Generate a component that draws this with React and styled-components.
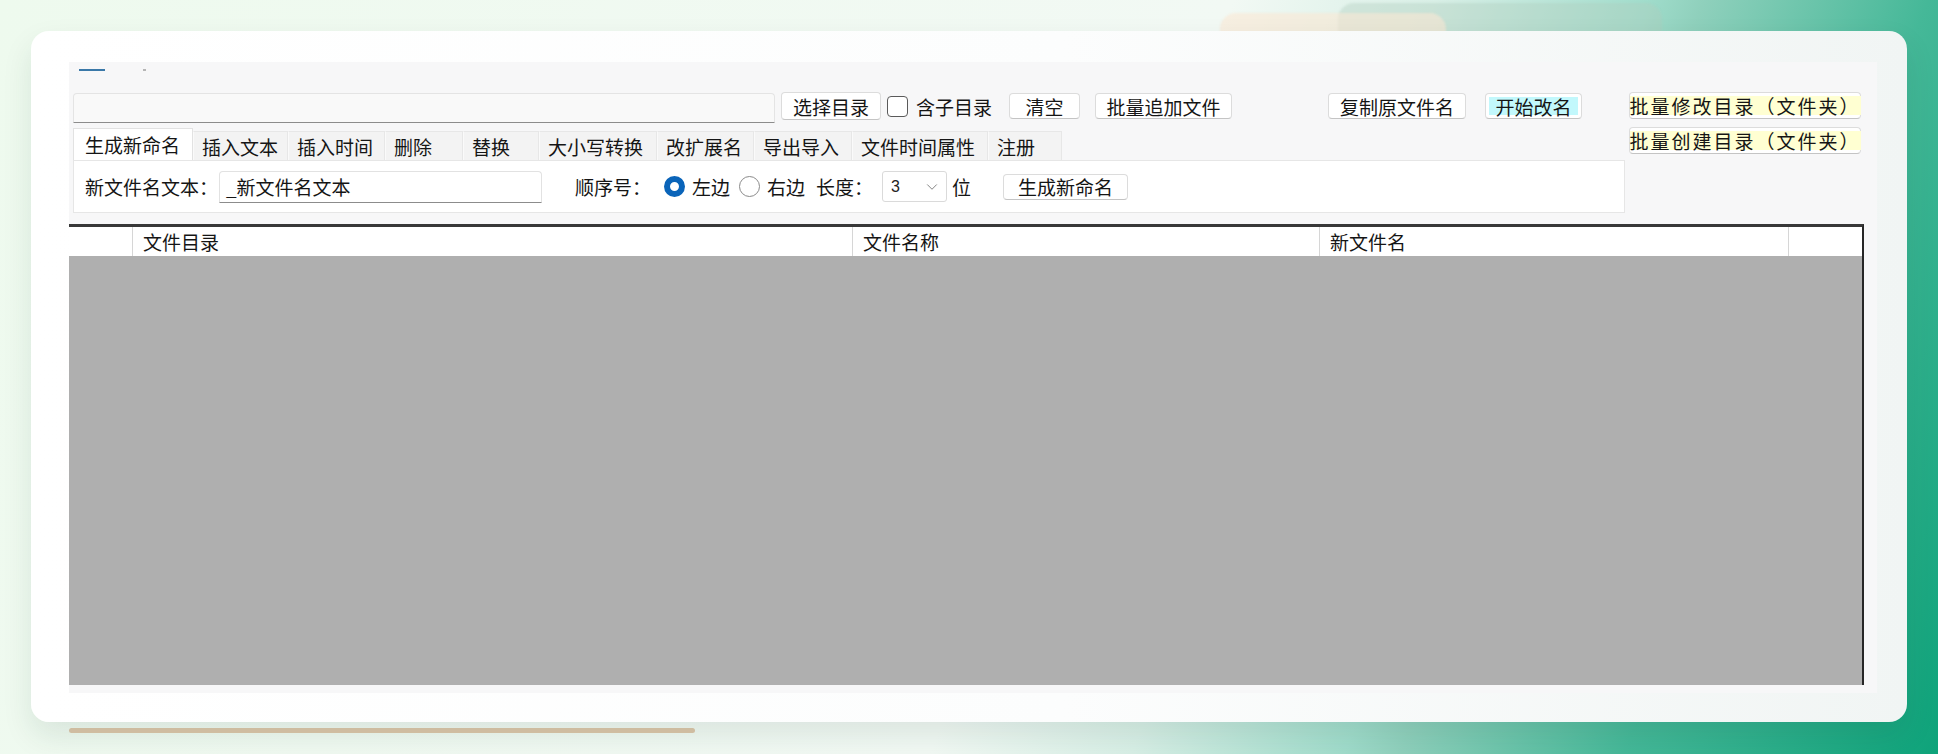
import React from 'react';
import styled, { createGlobalStyle } from 'styled-components';
import { ChevronDown } from 'lucide-react';

const Global = createGlobalStyle`
  html, body { margin: 0; padding: 0; }
  body {
    font-family: "Noto Sans CJK SC", "Noto Sans", "Liberation Sans", sans-serif;
    color: #151515;
  }
  #root { width: 1938px; height: 754px; overflow: hidden; }
  * { box-sizing: border-box; }
`;

const Page = styled.div`
  position: relative;
  width: 1938px;
  height: 754px;
  padding: 31px 31px 0;
  overflow: hidden;
  background: linear-gradient(
    112deg,
    #eefaee 0%,
    #f2f9f4 55%,
    #d8efe6 64%,
    #a0dccb 73.5%,
    #8fd0bc 76%,
    #45b898 86%,
    #0ea37a 100%
  );
`;

const GhostTab = styled.div`
  position: absolute;
  top: ${p => p.$top}px;
  left: ${p => p.$left}px;
  width: ${p => p.$w}px;
  height: 60px;
  border-radius: 16px;
  background: ${p => p.$bg};
  filter: blur(1px);
  z-index: 0;
`;

const Card = styled.div`
  position: relative;
  z-index: 1;
  height: 691px;
  border-radius: 18px;
  background: linear-gradient(90deg, #ffffff 0%, #fcfdfd 55%, #f1f5f4 100%);
  box-shadow: 0 14px 30px rgba(20, 60, 45, 0.1);
  padding: 31px 30px 29px 38px;
`;

const Window = styled.div`
  height: 100%;
  background: #f7f7f8;
  display: flex;
  flex-direction: column;
`;

const TitleStrip = styled.div`
  height: 29px;
  display: flex;
  align-items: flex-start;
  padding: 7px 0 0 10px;
  gap: 38px;
`;

const TitleMark = styled.span`
  display: block;
  width: ${p => p.$w}px;
  height: 2px;
  background: ${p => p.$c};
`;

const TopArea = styled.div`
  display: flex;
  padding-left: 4px;
`;

const LeftArea = styled.div`
  width: 1552px;
  display: flex;
  flex-direction: column;
`;

const Row = styled.div`
  height: 32px;
  display: flex;
  align-items: flex-start;
`;

const PathInput = styled.div`
  width: 702px;
  height: 30px;
  margin-top: 2px;
  background: #f9f9f9;
  border: 1px solid #e4e4e4;
  border-bottom: 1px solid #8c8c8c;
  border-radius: 4px 4px 0 0;
`;

const Button = styled.div`
  flex: none;
  width: ${p => p.$w}px;
  height: ${p => p.$h || 28}px;
  margin-left: ${p => p.$ml || 0}px;
  margin-top: ${p => p.$mt ?? 1}px;
  padding: ${p => (p.$tint ? '3px' : '0')};
  display: flex;
  align-items: stretch;
  justify-content: center;
  background: #ffffff;
  border: 1px solid #dcdcdc;
  border-bottom-color: #c4c4c4;
  border-radius: 4px;
  font-size: 19px;
  line-height: 1;
  white-space: nowrap;
`;

const ButtonFace = styled.span`
  flex: 1;
  display: flex;
  align-items: center;
  justify-content: center;
  background: ${p => p.$tint || 'transparent'};
  letter-spacing: ${p => p.$ls || 0}px;
`;

const Check = styled.div`
  flex: none;
  display: flex;
  align-items: center;
  height: 30px;
  margin-left: ${p => p.$ml}px;
  font-size: 19px;
  line-height: 1;
  gap: 8px;
`;

const CheckBox = styled.span`
  width: 21px;
  height: 21px;
  border: 1.5px solid #5a5a5a;
  border-radius: 4px;
  background: #fff;
`;

const Tabs = styled.div`
  margin-top: 5px;
  height: 32px;
  display: flex;
  align-items: flex-end;
`;

const Tab = styled.div`
  flex: none;
  width: ${p => p.$w}px;
  height: ${p => (p.$active ? 32 : 29)}px;
  padding-left: ${p => (p.$active ? 11 : 8)}px;
  display: flex;
  align-items: center;
  font-size: 19px;
  line-height: 1;
  white-space: nowrap;
  background: ${p => (p.$active ? '#ffffff' : '#f3f3f3')};
  border: 1px solid ${p => (p.$active ? '#e2e2e2' : '#e7e7e7')};
  border-left-color: ${p => (p.$active ? '#e2e2e2' : '#fafafa')};
  border-bottom: none;
`;

const TabPanel = styled.div`
  height: 53px;
  background: #ffffff;
  border: 1px solid #e6e6e6;
  display: flex;
  align-items: center;
  padding-left: 11px;
`;

const Label = styled.span`
  flex: none;
  width: ${p => p.$w}px;
  margin-left: ${p => p.$ml || 0}px;
  font-size: 19px;
  line-height: 1;
  white-space: nowrap;
  overflow: visible;
`;

const TextField = styled.div`
  flex: none;
  width: 323px;
  height: 32px;
  display: flex;
  align-items: center;
  padding-left: 6px;
  background: #fff;
  border: 1px solid #e2e2e2;
  border-bottom: 1px solid #8c8c8c;
  border-radius: 4px 4px 0 0;
  font-size: 19px;
  line-height: 1;
`;

const Radio = styled.span`
  flex: none;
  width: 21px;
  height: 21px;
  border-radius: 50%;
  background: #fff;
  margin-right: ${p => p.$mr}px;
  border: ${p => (p.$on ? '6px solid #0a64b9' : '1.5px solid #8a8a8a')};
`;

const Select = styled.div`
  flex: none;
  width: 65px;
  height: 31px;
  display: flex;
  align-items: center;
  justify-content: space-between;
  padding: 0 5px 0 8px;
  background: #fff;
  border: 1px solid #dadada;
  border-radius: 3px;
  font-family: "Liberation Sans", "Noto Sans", sans-serif;
  font-size: 16px;
  color: #222;
`;

const RightArea = styled.div`
  margin-left: 4px;
  padding-top: 1px;
  display: flex;
  flex-direction: column;
  gap: 8px;
`;

const Table = styled.div`
  margin-top: 11px;
  width: 1795px;
  height: 461px;
  display: flex;
  flex-direction: column;
  border-top: 3px solid #383838;
  border-right: 2px solid #262626;
`;

const HeaderRow = styled.div`
  height: 29px;
  display: grid;
  grid-template-columns: 64px 720px 467px 469px 1fr;
  background: #ffffff;
`;

const HeaderCell = styled.div`
  display: flex;
  align-items: center;
  padding-left: 10px;
  font-size: 19px;
  line-height: 1;
  border-right: ${p => (p.$last ? 'none' : '1px solid #d6d6d6')};
`;

const Body = styled.div`
  flex: 1;
  background: #afafaf;
`;

const BottomBar = styled.div`
  margin: 6px 0 0 38px;
  width: 626px;
  height: 5px;
  border-radius: 3px;
  background: #dcc6a9;
`;

const tabs = [
  ['生成新命名', 120],
  ['插入文本', 95],
  ['插入时间', 97],
  ['删除', 78],
  ['替换', 76],
  ['大小写转换', 118],
  ['改扩展名', 97],
  ['导出导入', 98],
  ['文件时间属性', 136],
  ['注册', 74],
];

export default function App() {
  return (
    <>
      <Global />
      <Page>
        <GhostTab $top={3} $left={1338} $w={324} $bg="rgba(175, 205, 190, 0.38)" />
        <GhostTab $top={13} $left={1220} $w={226} $bg="rgba(250, 232, 212, 0.6)" />
        <Card>
          <Window>
            <TitleStrip>
              <TitleMark $w={26} $c="#3a78a8" />
              <TitleMark $w={3} $c="#b5b5b5" />
            </TitleStrip>
            <TopArea>
              <LeftArea>
                <Row>
                  <PathInput />
                  <Button $w={100} $ml={6}><ButtonFace>选择目录</ButtonFace></Button>
                  <Check $ml={6}>
                    <CheckBox />
                    <span>含子目录</span>
                  </Check>
                  <Button $w={71} $ml={17} $mt={2} $h={26}><ButtonFace>清空</ButtonFace></Button>
                  <Button $w={137} $ml={15} $mt={2} $h={26}><ButtonFace>批量追加文件</ButtonFace></Button>
                  <Button $w={138} $ml={96} $mt={2} $h={26}><ButtonFace>复制原文件名</ButtonFace></Button>
                  <Button $w={97} $ml={19} $mt={2} $h={26} $tint>
                    <ButtonFace $tint="#c2f8fc">开始改名</ButtonFace>
                  </Button>
                </Row>
                <Tabs>
                  {tabs.map(([t, w], i) => (
                    <Tab key={t} $w={w} $active={i === 0}>{t}</Tab>
                  ))}
                </Tabs>
                <TabPanel>
                  <Label $w={134}>新文件名文本：</Label>
                  <TextField>_新文件名文本</TextField>
                  <Label $w={89} $ml={33}>顺序号：</Label>
                  <Radio $on $mr={7} />
                  <Label $w={47}>左边</Label>
                  <Radio $mr={7} />
                  <Label $w={49}>右边</Label>
                  <Label $w={66}>长度：</Label>
                  <Select>
                    <span>3</span>
                    <ChevronDown size={18} strokeWidth={1.2} color="#777" />
                  </Select>
                  <Label $w={51} $ml={5}>位</Label>
                  <Button $w={125} $h={26} $mt={0}><ButtonFace>生成新命名</ButtonFace></Button>
                </TabPanel>
              </LeftArea>
              <RightArea>
                <Button $w={232} $h={27} $mt={0} $tint>
                  <ButtonFace $tint="#ffffd2" $ls={2}>批量修改目录（文件夹）</ButtonFace>
                </Button>
                <Button $w={232} $h={27} $mt={0} $tint>
                  <ButtonFace $tint="#ffffd2" $ls={2}>批量创建目录（文件夹）</ButtonFace>
                </Button>
              </RightArea>
            </TopArea>
            <Table>
              <HeaderRow>
                <HeaderCell />
                <HeaderCell>文件目录</HeaderCell>
                <HeaderCell>文件名称</HeaderCell>
                <HeaderCell>新文件名</HeaderCell>
                <HeaderCell $last />
              </HeaderRow>
              <Body />
            </Table>
          </Window>
        </Card>
        <BottomBar />
      </Page>
    </>
  );
}
